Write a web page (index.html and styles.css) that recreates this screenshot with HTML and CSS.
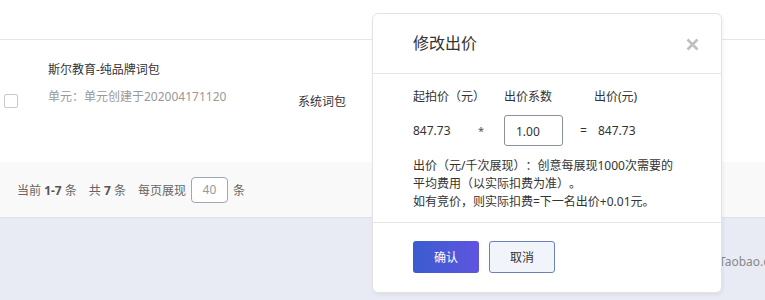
FILE: index.html
```html
<html>

<head>
    <link rel="stylesheet" href="styles.css">
</head>

<body>
    <div class="page">
        <div class="top-bar"></div>
        <div class="table-row">
            <span class="check"></span>
            <div class="unit">
                <p class="unit-name">斯尔教育-纯品牌词包</p>
                <p class="unit-sub">单元：单元创建于202004171120</p>
            </div>
            <div class="unit-type">系统词包</div>
        </div>
        <div class="pager">
            <span>当前 <b>1-7</b> 条</span>
            <span>共 <b>7</b> 条</span>
            <span>每页展现</span>
            <input class="page-size" value="40">
            <span>条</span>
        </div>
        <div class="footer">
            <span>Taobao.c</span>
        </div>
    </div>

    <div class="modal">
        <div class="modal-head">
            <h3>修改出价</h3>
            <button class="close" title="关闭">
                <svg width="13" height="13" viewBox="0 0 13 13">
                    <path d="M1.5 1.5L11.5 11.5M11.5 1.5L1.5 11.5" stroke="#bfbfbf" stroke-width="2.6" stroke-linecap="butt"/>
                </svg>
            </button>
        </div>
        <div class="modal-body">
            <div class="bid-labels">
                <span class="lab-1">起拍价（元）</span>
                <span class="lab-2">出价系数</span>
                <span>出价(元)</span>
            </div>
            <div class="bid-values">
                <span class="val-base">847.73</span>
                <span class="val-op">*</span>
                <input class="ratio" value="1.00">
                <span class="val-eq">=</span>
                <span>847.73</span>
            </div>
            <p class="tip">出价（元/千次展现）：创意每展现1000次需要的<br>平均费用（以实际扣费为准）。<br>如有竞价，则实际扣费=下一名出价+0.01元。</p>
        </div>
        <div class="modal-foot">
            <button class="btn btn-ok">确认</button>
            <button class="btn btn-cancel">取消</button>
        </div>
    </div>
</body>

</html>
```

FILE: styles.css
```css
body {
    margin: 0;
    font-family: "Noto Sans", "Noto Sans CJK SC", sans-serif;
    font-size: 12px;
    color: #333;
    background: #e8ebf3;
    text-spacing-trim: space-all;
}

p {
    margin: 0;
}

.page {
    display: flex;
    flex-direction: column;
    height: 300px;
}

.top-bar {
    height: 39px;
    background: #fff;
    border-bottom: 1px solid #e6e6e6;
}

.table-row {
    display: flex;
    align-items: flex-start;
    height: 122px;
    background: #fff;
}

.check {
    width: 12px;
    height: 12px;
    margin: 54px 0 0 4px;
    border: 1px solid #c8c8c8;
    border-radius: 2px;
    background: #fff;
}

.unit {
    width: 250px;
    margin: 20px 0 0 30px;
    line-height: 20px;
}

.unit-name {
    margin-bottom: 7px;
    color: #333;
}

.unit-sub {
    color: #999;
}

.unit-type {
    margin-top: 52px;
    line-height: 20px;
}

.pager {
    display: flex;
    align-items: center;
    gap: 12px;
    height: 55px;
    padding-left: 17px;
    background: #f9f9fa;
    border-bottom: 1px solid #dfe1e8;
    color: #666;
}

.pager b {
    color: #555;
}

.pager .page-size {
    width: 37px;
    height: 26px;
    margin: 0 -7px 0 -7px;
    padding: 0;
    border: 1px solid #a2a6b2;
    border-radius: 4px;
    text-align: center;
    font-family: inherit;
    font-size: 12px;
    color: #999;
    background: #fff;
}

.footer {
    flex: 1;
    padding: 35px 0 0 719px;
    line-height: 18px;
    font-size: 12px;
    color: #888;
    white-space: nowrap;
    overflow: hidden;
}

.modal {
    position: absolute;
    left: 372px;
    top: 13px;
    width: 348px;
    height: 278px;
    background: #fff;
    border: 1px solid #e3e3e3;
    border-radius: 6px;
    box-shadow: 1px 2px 4px rgba(0, 0, 0, 0.06);
    display: flex;
    flex-direction: column;
}

.modal-head {
    display: flex;
    align-items: center;
    justify-content: space-between;
    height: 59px;
    padding: 0 22px 0 40px;
    border-bottom: 1px solid #e6e6e6;
}

.modal-head h3 {
    margin: 0 0 3px;
    font-size: 16px;
    font-weight: normal;
    color: #333;
}

.close {
    border: none;
    background: none;
    padding: 0;
    width: 13px;
    height: 13px;
    margin-top: 1px;
}

.modal-body {
    padding: 13px 0 11px 40px;
    border-bottom: 1px solid #e6e6e6;
}

.bid-labels {
    display: flex;
    line-height: 20px;
}

.lab-1 {
    width: 91px;
}

.lab-2 {
    width: 90px;
}

.bid-values {
    display: flex;
    align-items: center;
    margin-top: 8px;
    height: 31px;
}

.val-base {
    width: 65px;
}

.val-op {
    width: 26px;
    font-size: 11px;
    color: #555;
}

.ratio {
    width: 59px;
    height: 31px;
    margin-right: 17px;
    padding: 2px 0 0 11px;
    border: 1px solid #8a8f9c;
    border-radius: 3px;
    font-family: inherit;
    font-size: 12px;
    color: #333;
    box-sizing: border-box;
}

.val-eq {
    width: 18px;
}

.tip {
    margin-top: 11px;
    line-height: 18px;
}

.modal-foot {
    display: flex;
    gap: 10px;
    padding: 18px 0 0 40px;
}

.btn {
    width: 66px;
    height: 32px;
    border-radius: 3px;
    font-family: inherit;
    font-size: 12px;
}

.btn-ok {
    border: none;
    color: #fff;
    background: linear-gradient(to right, #3a5ccf, #5f55df);
}

.btn-cancel {
    border: 1px solid #6c80b3;
    color: #333;
    background: #f1f4fb;
}
```
